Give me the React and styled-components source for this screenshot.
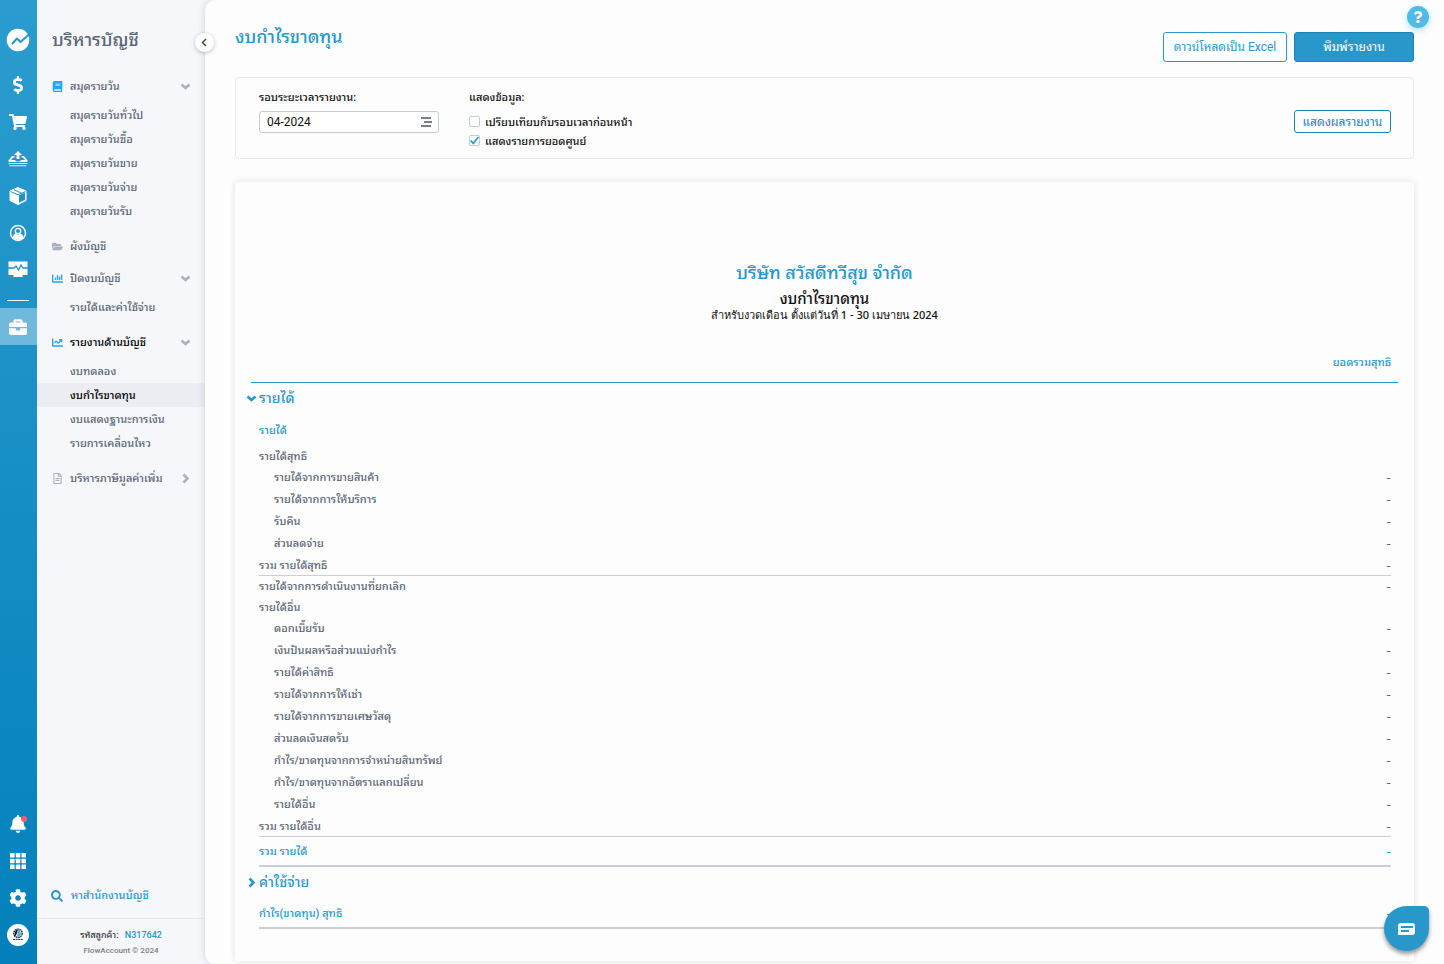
import React from "react";
import styled, { createGlobalStyle, css } from "styled-components";
import {
  FaDollarSign, FaShoppingCart, FaBriefcase, FaBell, FaCog, FaSearch, FaBook,
  FaFolderOpen, FaChartBar, FaChartLine, FaRegFileAlt, FaQuestion,
} from "react-icons/fa";

const blue = "#2898cb";
const deepBlue = "#1a83b5";
const slate = "#5b6676";
const rule = "#cacfdb";

const GlobalStyle = createGlobalStyle`
  * { box-sizing: border-box; }
  body {
    margin: 0;
    background: #f5f7fb;
    color: #111;
    font-family: Roboto, "Noto Sans Thai Looped", "Noto Looped Thai", "Noto Sans Thai", "Loma", "Noto Sans", sans-serif;
    font-size: 11px;
    font-weight: 500;
  }
  button, input { font: inherit; color: inherit; }
  h1, h2, h3, p, ul { margin: 0; padding: 0; }
  ul { list-style: none; }
  a { color: inherit; text-decoration: none; }
`;

const Page = styled.div`
  display: flex;
  min-height: 100vh;
`;

const Rail = styled.nav`
  position: sticky;
  top: 0;
  flex: 0 0 37px;
  height: 100vh;
  padding: 28px 1px 11px 0;
  display: flex;
  flex-direction: column;
  color: #fff;
  background: linear-gradient(#2b9ccf, #0380bb);
`;

const RailLink = styled.a`
  display: flex;
  align-items: center;
  justify-content: center;
  height: 37px;
  margin-right: -1px;
  padding-right: 1px;
  font-size: 18px;
  background: ${(p) => (p.$active ? "rgba(255,255,255,.36)" : "none")};
`;

const LogoLink = styled.a`
  display: flex;
  justify-content: center;
  margin-bottom: 14px;
`;

const RailDivider = styled.hr`
  width: 22px;
  height: 1px;
  margin: 12px auto 7px;
  border: 0;
  background: #fff;
`;

const RailBottom = styled.div`
  margin-top: auto;
`;

const BellBox = styled.span`
  position: relative;
  display: flex;
`;

const Dot = styled.span`
  position: absolute;
  top: 1px;
  right: 0;
  width: 6px;
  height: 6px;
  border-radius: 50%;
  background: #ff5b70;
`;

const Sidebar = styled.aside`
  position: sticky;
  top: 0;
  flex: 0 0 168px;
  height: 100vh;
  display: flex;
  flex-direction: column;
  color: ${slate};
  background: #f5f7fb;
`;

const SideTitle = styled.h2`
  padding: 25px 15px 15px;
  font-size: 18px;
  line-height: 30px;
  font-weight: 500;
`;

const Group = styled.a`
  display: flex;
  align-items: center;
  height: 32px;
  padding: 0 14px 0 15px;
  color: ${(p) => (p.$active ? "#000" : slate)};
  span { margin-bottom: 2px; }
  > svg:first-child { width: 11px; height: 11px; margin-right: 7px; color: ${(p) => (p.$tint ? "#1ea7fa" : "#a9b1bd")}; }
  > svg:last-child { margin-left: auto; color: #a9b1bd; }
`;

const SubList = styled.ul`
  margin: 1px 0 7px;
`;

const SubLink = styled.a`
  display: block;
  height: 24px;
  padding: 1px 0 0 33px;
  line-height: 24px;
  color: ${(p) => (p.$active ? "#000" : slate)};
  background: ${(p) => (p.$active ? "#ebedf3" : "none")};
`;

const FindOffice = styled.a`
  display: flex;
  align-items: center;
  gap: 8px;
  margin-top: auto;
  padding: 0 14px 12px;
  line-height: 20px;
  color: ${blue};
`;

const SideFooter = styled.footer`
  padding: 8px 0 5px;
  border-top: 1px solid #e7eaf0;
  text-align: center;
  font-size: 9px;
  line-height: 16px;
  color: #7b7f86;
`;

const Customer = styled.p`
  color: #333;
  a { margin-left: 4px; color: ${blue}; }
`;

const Copyright = styled.p`
  font-size: 8px;
`;

const Main = styled.main`
  position: relative;
  flex: 1;
  min-width: 0;
  padding: 22px 30px 1px;
  border-radius: 10px 0 0 10px;
  background: #fdfdfd;
  box-shadow: -1px 0 6px rgba(60, 70, 100, .16);
`;

const Collapse = styled.button`
  position: absolute;
  top: 33px;
  left: -10px;
  display: grid;
  place-items: center;
  width: 19px;
  height: 19px;
  padding: 0;
  border: 0;
  border-radius: 50%;
  background: #fff;
  color: #444b57;
  box-shadow: 0 1px 4px rgba(40, 50, 80, .3);
`;

const Header = styled.header`
  display: flex;
  justify-content: space-between;
`;

const PageTitle = styled.h1`
  font-size: 18px;
  line-height: 30px;
  font-weight: 500;
  color: ${blue};
`;

const Actions = styled.div`
  display: flex;
  gap: 7px;
  margin-top: 10px;
`;

const Button = styled.button`
  height: ${(p) => (p.$small ? "23px" : "30px")};
  width: ${(p) => p.$width};
  padding: 0 0 3px;
  border: 1px solid ${(p) => (p.$small || p.$primary ? deepBlue : blue)};
  border-radius: 3px;
  background: ${(p) => (p.$primary ? blue : "#fff")};
  color: ${(p) => (p.$primary ? "#fff" : p.$small ? deepBlue : blue)};
  font-size: 12px;
  font-weight: 400;
  white-space: nowrap;
`;

const Filter = styled.form`
  display: flex;
  gap: 30px;
  height: 82px;
  margin-top: 15px;
  padding: 10px 22px 0 23px;
  border: 1px solid #e6e8ed;
  border-radius: 4px;
  ${Button} { margin: 22px 0 0 auto; }
`;

const Caption = styled.label`
  display: block;
  margin-bottom: 3px;
  padding: 0;
  line-height: 20px;
`;

const Period = styled.div`
  display: flex;
  width: 180px;
  height: 22px;
  border: 1px solid #c3cad8;
  border-radius: 3px;
  background: #fff;
  input {
    flex: 1;
    min-width: 0;
    padding: 0 7px;
    border: 0;
    background: none;
    font-size: 12px;
    font-weight: 400;
    outline: none;
  }
  button {
    display: grid;
    place-items: center;
    width: 23px;
    padding: 0;
    border: 0;
    background: none;
  }
`;

const Options = styled.fieldset`
  margin: 0;
  padding: 0;
  border: 0;
`;

const Check = styled.label`
  display: flex;
  align-items: center;
  gap: 5px;
  height: 19px;
  input {
    appearance: none;
    width: 11px;
    height: 11px;
    margin: 2px 0 0;
    border: 1px solid #c3cad8;
    border-radius: 2px;
    background: #fff;
  }
  input:checked::before {
    content: "";
    display: block;
    width: 9px;
    height: 9px;
    background: ${blue};
    clip-path: polygon(0 55%, 15% 45%, 35% 68%, 88% 5%, 100% 18%, 37% 96%);
  }
`;

const Card = styled.section`
  margin-top: 23px;
  padding: 77px 16px 32px;
  border-radius: 3px;
  background: #fdfdfd;
  box-shadow: 0 0 7px rgba(0, 0, 0, .12);
`;

const ReportHead = styled.div`
  margin-bottom: 22px;
  text-align: center;
  h2 { margin-bottom: 4px; font-size: 18px; line-height: 28px; font-weight: 500; color: ${blue}; }
  h3 { font-size: 15px; line-height: 16px; font-weight: 500; }
  p { line-height: 16px; font-family: "Noto Sans", Roboto, sans-serif; }
`;

const Report = styled.table`
  width: 100%;
  border-spacing: 0;
  th, td { padding: 0; font-weight: 500; text-align: left; }
  th:first-child { padding-left: 8px; }
  td:last-child, thead th:last-child { width: 120px; padding-right: 7px; text-align: right; }
  thead th { height: 38px; padding-bottom: 6px; border-bottom: 1px solid ${blue}; color: ${blue}; }
`;

const rowKinds = {
  section: css`height: 32px; line-height: 32px; color: ${blue}; font-size: 14px;`,
  title: css`height: 31px; line-height: 31px; color: ${blue};`,
  plain: css`height: 21px; line-height: 21px;`,
  leaf: css`height: 22px; line-height: 22px;`,
  total: css`height: 21px; line-height: 21px; border-bottom: 1px solid ${rule};`,
  grand: css`height: 30px; line-height: 30px; border-bottom: 2px solid ${rule}; color: ${blue};`,
};

const Cell = styled.div`
  color: ${slate};
  ${(p) => rowKinds[p.$kind]}
  padding-left: ${(p) => (p.$indent ? "15px" : 0)};
`;

const Amount = styled(Cell)`
  font-family: "DejaVu Sans", sans-serif;
  font-size: 13px;
`;

const Toggle = styled.button`
  display: flex;
  align-items: center;
  gap: 2px;
  height: 30px;
  margin-left: -13px;
  padding: 0;
  border: 0;
  background: none;
`;

const Help = styled.button`
  position: fixed;
  top: 6px;
  right: 15px;
  display: grid;
  place-items: center;
  width: 22px;
  height: 22px;
  padding: 0;
  border: 0;
  border-radius: 50%;
  background: #4dbde8;
  color: #fff;
  box-shadow: 0 2px 6px rgba(77, 189, 232, .45);
`;

const Chat = styled.button`
  position: fixed;
  right: 15px;
  bottom: 13px;
  display: grid;
  place-items: center;
  width: 45px;
  height: 45px;
  padding: 0;
  border: 0;
  border-radius: 50% 5px 50% 50%;
  background: ${blue};
  box-shadow: 0 3px 4px rgba(0, 0, 0, .4);
`;

const chevronPaths = {
  down: "M1.500 3.500 5.500 7l4-3.500",
  right: "M3.500 1.500 7.500 5.500 3.500 9.500",
  left: "M7 2 3.500 5.500 7 9",
};
const Chevron = ({ to, weight = 2.6 }) => (
  <svg width="11" height="11" viewBox="0 0 11 11" fill="none" stroke="currentColor" strokeWidth={weight}>
    <path d={chevronPaths[to]} />
  </svg>
);
const Logo = () => (
  <svg width="24" height="24" viewBox="0 0 24 24">
    <circle cx="12" cy="12" r="11.300" fill="#fff" />
    <path d="M6 16 11 10.500l3.500 3.500L23.500 6" fill="none" stroke="#2898cb" strokeWidth="2" strokeLinejoin="round" />
  </svg>
);
const Outbox = () => (
  <svg width="20" height="18" viewBox="0 0 20 18" fill="#fff">
    <path d="M10 1 14 5h-2.600v4H8.600V5H6z" />
    <path d="M4 6h2.500v1.500H5L3 10h4l1 1.500h4L13 10h4l-2-2.500h-1.500V6H16l3.500 4.500V12H.5v-1.500z" />
    <path d="M.5 13h19v1H.5zM1.500 15.200h17v1h-17z" opacity=".85" />
  </svg>
);
const Cube = () => (
  <svg width="20" height="20" viewBox="0 0 20 20">
    <path d="M10 1.500 18 5v9.500L10 18.500 2 14.500V5z" fill="#fff" stroke="#fff" strokeWidth="1" strokeLinejoin="round" />
    <path d="M11 9.300 17 6.500v7.300l-6 3z" fill="#2191c6" />
    <path d="m2.500 5.500 7.500 3.300 7.500-3.300M6 3.800l7.500 3.300" fill="none" stroke="#2191c6" strokeWidth="1" />
  </svg>
);
const User = () => (
  <svg width="18" height="18" viewBox="0 0 18 18">
    <circle cx="9" cy="9" r="7.500" fill="none" stroke="#fff" strokeWidth="1.400" />
    <circle cx="9" cy="7" r="2.700" fill="none" stroke="#fff" strokeWidth="1.300" />
    <path d="M3.500 14c.2-2.800 1.500-4 3-4.500 1.500 1.200 3.500 1.200 5 0 1.500.5 2.800 1.700 3 4.500L9 16.500z" fill="#fff" />
  </svg>
);
const Monitor = () => (
  <svg width="20" height="17" viewBox="0 0 20 17">
    <path d="M.5.5h19v13.500H14l1 2H5l1-2H.5z" fill="#fff" />
    <path d="M0 7h6l2-2 2.500 4L13 4l2 3h5" fill="none" stroke="#1e8fc5" strokeWidth="1.300" />
  </svg>
);
const Grid = () => (
  <svg width="16" height="16" viewBox="0 0 16 16" fill="#fff">
    {[0, 5.75, 11.5].map((y) => [0, 5.75, 11.5].map((x) => (
      <rect key={`${x}-${y}`} x={x} y={y} width="4.500" height="4.500" rx=".6" />
    )))}
  </svg>
);
const Avatar = () => (
  <svg width="22" height="22" viewBox="0 0 22 22">
    <circle cx="11" cy="11" r="11" fill="#fff" />
    <circle cx="11" cy="9.300" r="4.200" fill="none" stroke="#24303c" strokeWidth="1.400" strokeDasharray="1.800 .5" />
    <path d="M11 5.200c-3 .8-4 4-3 7.300 1.500-1.500 2.500-4 3-7.300z" fill="#14202c" />
    <path d="M11 5.200c3 .8 3.500 4.500 2.200 7.300H9.500c1.200-2 1.500-4.500 1.500-7.300z" fill="#5fb0d6" />
    <path d="M6 15.500h10" stroke="#24303c" strokeWidth="1.200" strokeDasharray="2 .6" />
  </svg>
);
const ListIcon = () => (
  <svg width="11" height="10" viewBox="0 0 11 10" stroke="#4b5563" strokeWidth="1.500">
    <path d="M0 1h10M3 5h8M0 9h10" fill="none" />
  </svg>
);
const ChatIcon = () => (
  <svg width="17" height="12" viewBox="0 0 17 12">
    <path d="M3 0h11a3 3 0 0 1 3 3v6a3 3 0 0 1-3 3H0V3a3 3 0 0 1 3-3z" fill="#fff" />
    <path d="M3 4h12M3 8h8" stroke={blue} strokeWidth="1.800" />
  </svg>
);

const menu = [
  { icon: FaBook, label: "สมุดรายวัน", tint: true, items: ["สมุดรายวันทั่วไป", "สมุดรายวันซื้อ", "สมุดรายวันขาย", "สมุดรายวันจ่าย", "สมุดรายวันรับ"] },
  { icon: FaFolderOpen, label: "ผังบัญชี" },
  { icon: FaChartBar, label: "ปิดงบบัญชี", tint: true, items: ["รายได้และค่าใช้จ่าย"] },
  { icon: FaChartLine, label: "รายงานด้านบัญชี", tint: true, active: true, items: ["งบทดลอง", "งบกำไรขาดทุน", "งบแสดงฐานะการเงิน", "รายการเคลื่อนไหว"] },
  { icon: FaRegFileAlt, label: "บริหารภาษีมูลค่าเพิ่ม", closed: true },
];

const rows = [
  ["section", "รายได้", true],
  ["title", "รายได้"],
  ["plain", "รายได้สุทธิ"],
  ["leaf", "รายได้จากการขายสินค้า", "-"],
  ["leaf", "รายได้จากการให้บริการ", "-"],
  ["leaf", "รับคืน", "-"],
  ["leaf", "ส่วนลดจ่าย", "-"],
  ["total", "รวม รายได้สุทธิ", "-"],
  ["plain", "รายได้จากการดำเนินงานที่ยกเลิก", "-"],
  ["plain", "รายได้อื่น"],
  ["leaf", "ดอกเบี้ยรับ", "-"],
  ["leaf", "เงินปันผลหรือส่วนแบ่งกำไร", "-"],
  ["leaf", "รายได้ค่าสิทธิ", "-"],
  ["leaf", "รายได้จากการให้เช่า", "-"],
  ["leaf", "รายได้จากการขายเศษวัสดุ", "-"],
  ["leaf", "ส่วนลดเงินสดรับ", "-"],
  ["leaf", "กำไร/ขาดทุนจากการจำหน่ายสินทรัพย์", "-"],
  ["leaf", "กำไร/ขาดทุนจากอัตราแลกเปลี่ยน", "-"],
  ["leaf", "รายได้อื่น", "-"],
  ["total", "รวม รายได้อื่น", "-"],
  ["grand", "รวม รายได้", "-"],
  ["section", "ค่าใช้จ่าย", false],
  ["grand", "กำไร(ขาดทุน) สุทธิ", "-"],
];

function ReportRow({ kind, label, value }) {
  if (kind === "section") {
    return (
      <tr>
        <th colSpan={2} scope="rowgroup">
          <Cell $kind={kind}>
            <Toggle type="button" aria-expanded={value}>
              <Chevron to={value ? "down" : "right"} />
              {label}
            </Toggle>
          </Cell>
        </th>
      </tr>
    );
  }
  return (
    <tr>
      <th scope="row"><Cell $kind={kind} $indent={kind === "leaf"}>{label}</Cell></th>
      <td><Amount $kind={kind}>{value}</Amount></td>
    </tr>
  );
}

export default function App() {
  return (
    <>
      <GlobalStyle />
      <Page>
        <Rail>
          <LogoLink href="#" aria-label="FlowAccount"><Logo /></LogoLink>
          <RailLink href="#" aria-label="ขาย"><FaDollarSign /></RailLink>
          <RailLink href="#" aria-label="ซื้อ"><FaShoppingCart /></RailLink>
          <RailLink href="#" aria-label="ค่าใช้จ่าย"><Outbox /></RailLink>
          <RailLink href="#" aria-label="สินค้า"><Cube /></RailLink>
          <RailLink href="#" aria-label="ผู้ติดต่อ"><User /></RailLink>
          <RailLink href="#" aria-label="ภาพรวม"><Monitor /></RailLink>
          <RailDivider />
          <RailLink href="#" aria-label="บัญชี" $active><FaBriefcase /></RailLink>
          <RailBottom>
            <RailLink href="#" aria-label="แจ้งเตือน"><BellBox><FaBell /><Dot /></BellBox></RailLink>
            <RailLink href="#" aria-label="แอป"><Grid /></RailLink>
            <RailLink href="#" aria-label="ตั้งค่า"><FaCog /></RailLink>
            <RailLink href="#" aria-label="โปรไฟล์"><Avatar /></RailLink>
          </RailBottom>
        </Rail>

        <Sidebar>
          <SideTitle>บริหารบัญชี</SideTitle>
          {menu.map(({ icon: Icon, label, tint, active, items, closed }) => (
            <div key={label}>
              <Group href="#" $tint={tint} $active={active}>
                <Icon />
                <span>{label}</span>
                {items && <Chevron to="down" />}
                {closed && <Chevron to="right" />}
              </Group>
              {items && (
                <SubList>
                  {items.map((item) => (
                    <li key={item}><SubLink href="#" $active={item === "งบกำไรขาดทุน"}>{item}</SubLink></li>
                  ))}
                </SubList>
              )}
            </div>
          ))}
          <FindOffice href="#"><FaSearch size={12} />หาสำนักงานบัญชี</FindOffice>
          <SideFooter>
            <Customer>รหัสลูกค้า: <a href="#">N317642</a></Customer>
            <Copyright>FlowAccount © 2024</Copyright>
          </SideFooter>
        </Sidebar>

        <Main>
          <Collapse type="button" aria-label="ย่อเมนู"><Chevron to="left" weight={1.5} /></Collapse>
          <Header>
            <PageTitle>งบกำไรขาดทุน</PageTitle>
            <Actions>
              <Button type="button" $width="124px">ดาวน์โหลดเป็น Excel</Button>
              <Button type="button" $primary $width="120px">พิมพ์รายงาน</Button>
            </Actions>
          </Header>

          <Filter>
            <div>
              <Caption htmlFor="period">รอบระยะเวลารายงาน:</Caption>
              <Period>
                <input id="period" defaultValue="04-2024" />
                <button type="button" aria-label="เลือกงวด"><ListIcon /></button>
              </Period>
            </div>
            <Options>
              <Caption as="legend">แสดงข้อมูล:</Caption>
              <Check><input type="checkbox" />เปรียบเทียบกับรอบเวลาก่อนหน้า</Check>
              <Check><input type="checkbox" defaultChecked />แสดงรายการยอดศูนย์</Check>
            </Options>
            <Button type="button" $small $width="97px">แสดงผลรายงาน</Button>
          </Filter>

          <Card>
            <ReportHead>
              <h2>บริษัท สวัสดีทวีสุข จำกัด</h2>
              <h3>งบกำไรขาดทุน</h3>
              <p>สำหรับงวดเดือน ตั้งแต่วันที่ 1 - 30 เมษายน 2024</p>
            </ReportHead>
            <Report>
              <thead>
                <tr><th /><th scope="col">ยอดรวมสุทธิ</th></tr>
              </thead>
              <tbody>
                {rows.map(([kind, label, value], i) => (
                  <ReportRow key={i} kind={kind} label={label} value={value} />
                ))}
              </tbody>
            </Report>
          </Card>
        </Main>
      </Page>
      <Help type="button" aria-label="ช่วยเหลือ"><FaQuestion size={12} /></Help>
      <Chat type="button" aria-label="แชท"><ChatIcon /></Chat>
    </>
  );
}
